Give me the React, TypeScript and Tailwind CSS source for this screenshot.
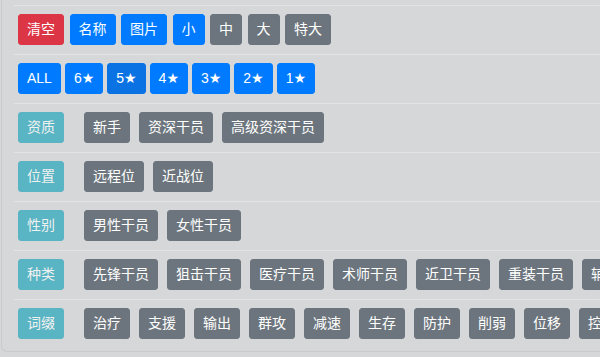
import React from "react";

type Tone = "red" | "blue" | "blueActive" | "gray";

const toneClass: Record<Tone, string> = {
  red: "bg-[#dc3545] border-[#dc3545]",
  blue: "bg-[#007bff] border-[#007bff]",
  blueActive: "bg-[#0a72e3] border-[#0a72e3]",
  gray: "bg-[#6c757d] border-[#6c757d]",
};

const Btn: React.FC<{ tone: Tone; children: React.ReactNode }> = ({ tone, children }) => (
  <button
    className={`shrink-0 whitespace-nowrap rounded-[3px] border px-2 py-1 text-[14px] leading-[21px] text-white ${toneClass[tone]}`}
  >
    {children}
  </button>
);

const topRow: [string, Tone][] = [
  ["清空", "red"],
  ["名称", "blue"],
  ["图片", "blue"],
  ["小", "blue"],
  ["中", "gray"],
  ["大", "gray"],
  ["特大", "gray"],
];

const stars: [string, Tone][] = [
  ["ALL", "blue"],
  ["6★", "blue"],
  ["5★", "blueActive"],
  ["4★", "blue"],
  ["3★", "blue"],
  ["2★", "blue"],
  ["1★", "blue"],
];

const filters: { label: string; items: string[] }[] = [
  { label: "资质", items: ["新手", "资深干员", "高级资深干员"] },
  { label: "位置", items: ["远程位", "近战位"] },
  { label: "性别", items: ["男性干员", "女性干员"] },
  {
    label: "种类",
    items: ["先锋干员", "狙击干员", "医疗干员", "术师干员", "近卫干员", "重装干员", "辅助干员", "特种干员"],
  },
  {
    label: "词缀",
    items: ["治疗", "支援", "输出", "群攻", "减速", "生存", "防护", "削弱", "位移", "控场", "爆发", "召唤"],
  },
];

const Row: React.FC<{ className?: string; children: React.ReactNode }> = ({ className = "", children }) => (
  <div className={`flex flex-nowrap items-center border-t border-[#e2e3e5] pl-1 pt-2 pb-[9px] ${className}`}>
    {children}
  </div>
);

export default function App() {
  return (
    <div
      className="h-[357px] w-[600px] overflow-hidden bg-[#d6d7d9]"
      style={{ fontFamily: '"Liberation Sans", "DejaVu Sans", "Noto Sans CJK SC", sans-serif' }}
    >
      <div className="ml-px w-[900px] rounded-bl-md border-b border-l border-[#c9cacd] pt-[5px] pb-[3px] pl-3">
        <Row className="gap-[5.5px]">
          {topRow.map(([t, tone]) => (
            <Btn key={t} tone={tone}>
              {t}
            </Btn>
          ))}
        </Row>
        <Row className="gap-1">
          {stars.map(([t, tone]) => (
            <Btn key={t} tone={tone}>
              {t}
            </Btn>
          ))}
        </Row>
        {filters.map((f) => (
          <Row key={f.label} className="gap-[9px]">
            <span className="mr-[11px] shrink-0 rounded-[3px] border border-[#17a2b8] bg-[#17a2b8] px-2 py-1 text-[14px] leading-[21px] text-white opacity-65">
              {f.label}
            </span>
            {f.items.map((t) => (
              <Btn key={t} tone="gray">
                {t}
              </Btn>
            ))}
          </Row>
        ))}
      </div>
    </div>
  );
}
